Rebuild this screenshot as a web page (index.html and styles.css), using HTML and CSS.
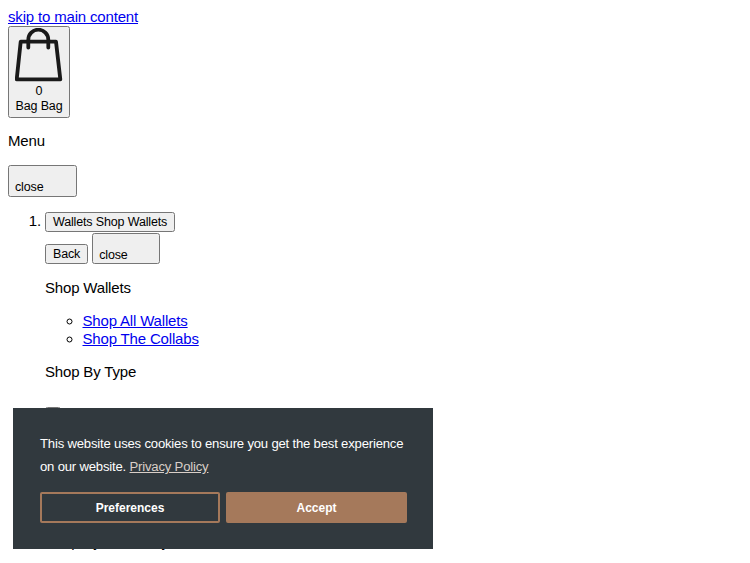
FILE: index.html
```html
<!DOCTYPE html>
<html lang="en">
<head>
<meta charset="utf-8">
<title>Wallets</title>
<link rel="stylesheet" href="styles.css">
</head>
<body>
<a href="#main">skip to main content</a>
<div class="bag-row">
  <button class="bag-btn" type="button">
    <svg class="bag-icon" viewBox="0 0 48 54" width="48" height="54" fill="none" stroke="#1a1a1a" stroke-width="3.8" stroke-linejoin="round" stroke-linecap="round">
      <path d="M5.7 13.7H41L45.3 51.3H1.7Z"/>
      <path d="M13.3 19.6V11.7a10 10 0 0 1 20 0V19.6"/>
    </svg>
    <span class="bag-count">0</span>
    <span class="bag-label">Bag Bag</span>
  </button>
</div>
<p class="menu-title">Menu</p>
<button class="close-btn" type="button">close</button>
<ol class="menu">
  <li>
    <button type="button">Wallets Shop Wallets</button>
    <div class="subhead">
      <button type="button">Back</button>
      <button class="close-btn close-small" type="button">close</button>
    </div>
    <p class="group-title">Shop Wallets</p>
    <ul class="links">
      <li><a href="#all">Shop All Wallets</a></li>
      <li><a href="#collabs">Shop The Collabs</a></li>
    </ul>
    <p class="group-title">Shop By Type</p>
    <button class="type-btn" type="button"></button>
    <p class="display-text">Shop By Discovery</p>
  </li>
</ol>
<div class="cookie" role="dialog">
  <p class="cookie-text">This website uses cookies to ensure you get the best experience on our website. <a href="#privacy">Privacy Policy</a></p>
  <div class="cookie-actions">
    <button class="cookie-btn pref" type="button">Preferences</button>
    <button class="cookie-btn accept" type="button">Accept</button>
  </div>
</div>
</body>
</html>
```
FILE: styles.css
```css
html, body { overflow: hidden; height: 100%; }
body {
  margin: 8px;
  font-family: "Liberation Sans", Arial, sans-serif;
  font-size: 15px;
  line-height: 18px;
  letter-spacing: -0.17px;
  color: #000;
}
button {
  font-family: "Liberation Sans", Arial, sans-serif;
  font-size: 12.5px;
  line-height: 14px;
  letter-spacing: -0.15px;
}
.bag-row { display: flex; }
.bag-btn {
  display: flex;
  flex-direction: column;
  align-items: center;
  width: 62px;
  height: 92px;
  padding: 0 4px;
  line-height: 15px;
}
.bag-icon { display: block; flex: none; }
.bag-count { margin-top: 2px; }
.bag-label { white-space: nowrap; }
.menu-title { margin: 14px 0 15px; }
.close-btn {
  display: block;
  width: 69px;
  height: 32px;
  padding: 12px 5px 0;
  text-align: left;
}
.close-small { width: 68px; height: 31px; display: inline-block; vertical-align: bottom; }
.menu { margin: 15px 0; padding-left: 37px; }
.subhead { line-height: 0; padding-top: 1px; }
.group-title { margin: 15px 0; }
.links { margin: 15px 0; padding-left: 37.5px; }
.type-btn { display: block; width: 14px; height: 14px; margin-top: 26px; }
.display-text { margin: 112px 0 0; }
.cookie {
  position: fixed;
  left: 13px;
  top: 408px;
  width: 420px;
  height: 141px;
  box-sizing: border-box;
  padding: 24px 26px 26px 27px;
  background: #31393e;
  color: #fff;
}
.cookie-text {
  margin: 0;
  font-size: 13.125px;
  line-height: 23px;
  letter-spacing: -0.19px;
}
.cookie-text a { color: #d9cfc8; }
.cookie-actions { display: flex; gap: 6px; margin-top: 14px; }
.cookie-btn {
  height: 31px;
  border-radius: 2px;
  font-size: 12px;
  font-weight: 700;
  letter-spacing: 0;
  color: #fff;
}
.pref { flex: none; width: 180px; background: #31393e; border: 2px solid #a5795b; }
.accept { flex: 1; background: #a5795b; border: 2px solid #a5795b; }
```
